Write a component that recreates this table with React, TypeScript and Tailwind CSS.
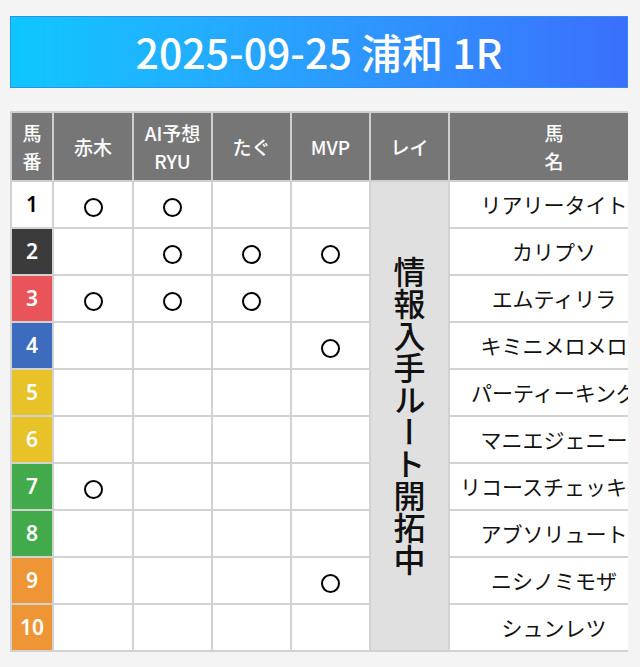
const rows = [
  { no: 1, bg: 'bg-white', fg: 'text-black', name: 'リアリータイト', marks: [true, true, false, false] },
  { no: 2, bg: 'bg-[#3b3b3b]', fg: 'text-white', name: 'カリプソ', marks: [false, true, true, true] },
  { no: 3, bg: 'bg-[#e8545a]', fg: 'text-white', name: 'エムティリラ', marks: [true, true, true, false] },
  { no: 4, bg: 'bg-[#3d6bbd]', fg: 'text-white', name: 'キミニメロメロ', marks: [false, false, false, true] },
  { no: 5, bg: 'bg-[#e7c229]', fg: 'text-white', name: 'パーティーキング', marks: [false, false, false, false] },
  { no: 6, bg: 'bg-[#e7c229]', fg: 'text-white', name: 'マニエジェニー', marks: [false, false, false, false] },
  { no: 7, bg: 'bg-[#43aa4b]', fg: 'text-white', name: 'リコースチェッキー', marks: [true, false, false, false] },
  { no: 8, bg: 'bg-[#43aa4b]', fg: 'text-white', name: 'アブソリュート', marks: [false, false, false, false] },
  { no: 9, bg: 'bg-[#ee9535]', fg: 'text-white', name: 'ニシノミモザ', marks: [false, false, false, true] },
  { no: 10, bg: 'bg-[#ee9535]', fg: 'text-white', name: 'シュンレツ', marks: [false, false, false, false] },
];

const jp = "font-['Noto_Sans_CJK_JP','Noto_Sans',sans-serif]";

const cell = 'border-2 border-[#d2d2d2] text-center';

export default function App() {
  return (
    <div className={`min-h-screen bg-[#f4f4f4] pl-[10px] pr-[12px] pt-[16px] ${jp}`}>
      <div className="h-[72px] flex items-center justify-center border border-[#2f8cf5] bg-gradient-to-r from-[#0dc7fe] to-[#3a6ffc]">
        <h1 className="text-white text-[41px] font-medium">2025-09-25 浦和 1R</h1>
      </div>

      <div className="mt-[23px] overflow-hidden">
        <table className="table-fixed border-collapse w-[648px] bg-white">
          <colgroup>
            <col className="w-[42px]" />
            <col className="w-[80px]" />
            <col className="w-[79px]" />
            <col className="w-[79px]" />
            <col className="w-[79px]" />
            <col className="w-[79px]" />
            <col className="w-[210px]" />
          </colgroup>
          <thead>
            <tr className="h-[69px] bg-[#767676] text-white text-[19px] leading-[28px]">
              <th className="border-2 border-[#cfcfcf] font-medium">馬<br />番</th>
              <th className="border-2 border-[#cfcfcf] font-medium">赤木</th>
              <th className="border-2 border-[#cfcfcf] font-medium">AI予想<br />RYU</th>
              <th className="border-2 border-[#cfcfcf] font-medium">たぐ</th>
              <th className="border-2 border-[#cfcfcf] font-medium">MVP</th>
              <th className="border-2 border-[#cfcfcf] font-medium">レイ</th>
              <th className="border-2 border-[#cfcfcf] font-medium">馬<br />名</th>
            </tr>
          </thead>
          <tbody>
            {rows.map((r, i) => (
              <tr key={r.no} className="h-[47px]">
                <td className={`${cell} text-[21px] font-semibold font-['Noto_Sans',sans-serif] ${r.bg} ${r.fg}`}>
                  {r.no}
                </td>
                {r.marks.map((m, j) => (
                  <td key={j} className={`${cell} align-middle`}>
                    {m && (
                      <span
                        aria-label="○"
                        className="inline-block align-middle w-[19px] h-[19px] rounded-full border-2 border-black"
                      />
                    )}
                  </td>
                ))}
                {i === 0 && (
                  <td rowSpan={10} className={`${cell} bg-[#e0e0e0] align-middle`}>
                    <div className="flex justify-center">
                      <div className="[writing-mode:vertical-rl] text-[32px] leading-[1] font-medium text-[#111]">
                        情報入手ルート開拓中
                      </div>
                    </div>
                  </td>
                )}
                <td className={`${cell} px-[8px] text-[21px] text-[#111] whitespace-nowrap`}>
                  {r.name}
                </td>
              </tr>
            ))}
          </tbody>
        </table>
      </div>
    </div>
  );
}
